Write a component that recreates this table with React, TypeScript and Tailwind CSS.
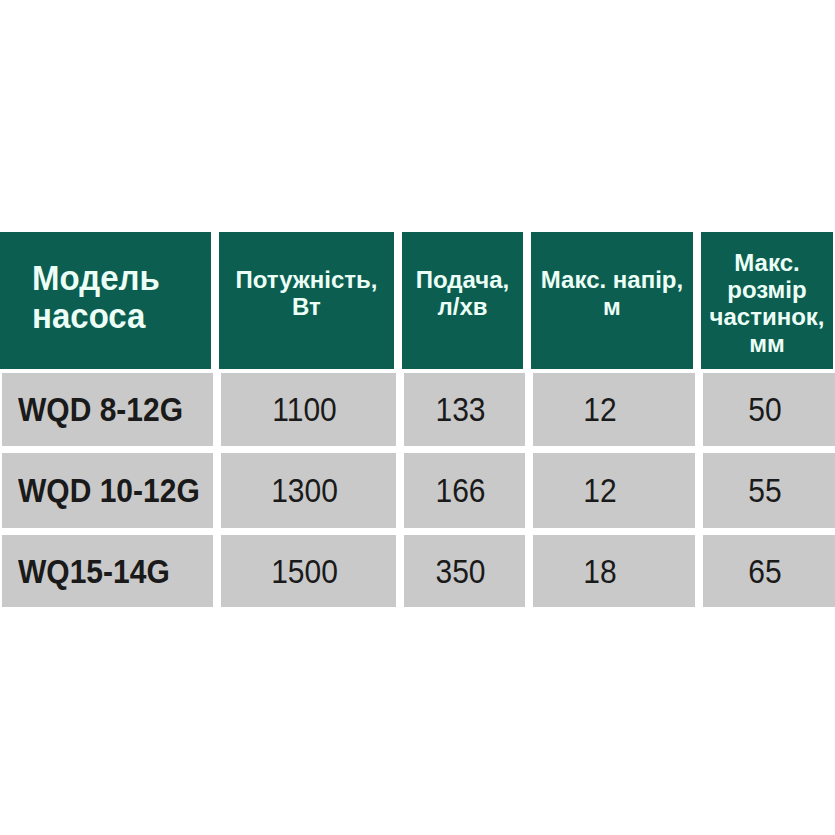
const headers = [
  { lines: ['Потужність,', 'Вт'], pad: 'pb-4' },
  { lines: ['Подача,', 'л/хв'], pad: 'pb-4' },
  { lines: ['Макс. напір,', 'м'], pad: 'pb-4' },
  { lines: ['Макс.', 'розмір', 'частинок,', 'мм'], pad: 'pt-1' },
]

const rows = [
  { model: 'WQD 8-12G', values: ['1100', '133', '12', '50'], h: 'h-[73px]' },
  { model: 'WQD 10-12G', values: ['1300', '166', '12', '55'], h: 'h-[75px]' },
  { model: 'WQ15-14G', values: ['1500', '350', '18', '65'], h: 'h-[72px]' },
]

// small per-column nudge, numbers sit a bit left of centre in the original
const valuePad = ['pr-2', 'pr-2', 'pr-[28px]', 'pr-2']

export default function App() {
  return (
    <div
      className="w-[835px] h-[835px] bg-white pt-[232px]"
      style={{ fontFamily: '"Liberation Sans", Arial, sans-serif' }}
    >
      <div className="grid grid-cols-[211px_175px_121px_162px_132px] gap-x-2">
        {/* header */}
        <div className="h-[137px] bg-[#0c5e50] flex items-center pl-[32px] pb-2">
          <div className="text-[33px] leading-[36px] font-bold text-[#ecfff7] scale-y-[1.06]">
            Модель
            <br />
            насоса
          </div>
        </div>
        {headers.map((h, i) => (
          <div
            key={i}
            className={`h-[137px] bg-[#0c5e50] flex items-center justify-center ${h.pad}`}
          >
            <div className="text-[24px] leading-[27px] font-bold text-[#ecfff7] text-center">
              {h.lines.map((l, j) => (
                <div key={j}>{l}</div>
              ))}
            </div>
          </div>
        ))}
      </div>

      <div className="mt-1 flex flex-col gap-[7px]">
        {rows.map((r) => (
          <div
            key={r.model}
            className="grid grid-cols-[211px_175px_121px_162px_132px] gap-x-2 pl-[2px]"
          >
            <div className={`${r.h} bg-[#c9c9c9] flex items-center pl-[16px]`}>
              <span className="text-[30px] font-bold text-[#1a1a1a] scale-y-[1.1]">
                {r.model}
              </span>
            </div>
            {r.values.map((v, i) => (
              <div
                key={i}
                className={`${r.h} bg-[#c9c9c9] flex items-center justify-center ${valuePad[i]}`}
              >
                <span className="text-[30px] text-[#1a1a1a] scale-y-[1.1]">{v}</span>
              </div>
            ))}
          </div>
        ))}
      </div>
    </div>
  )
}
